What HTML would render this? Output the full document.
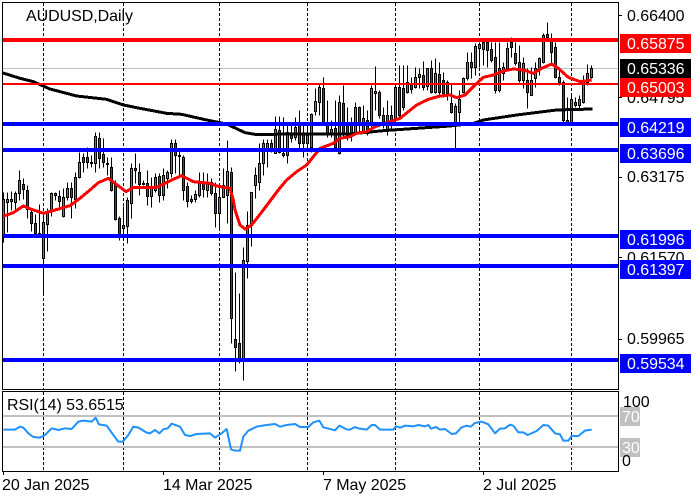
<!DOCTYPE html>
<html><head><meta charset="utf-8"><style>
html,body{margin:0;padding:0;background:#fff}
#c{position:relative;width:700px;height:500px;overflow:hidden;background:#fff;font-family:"Liberation Sans",sans-serif;font-size:16px;color:#000}
svg{position:absolute;left:0;top:0}
.t{position:absolute;white-space:nowrap;line-height:19px;height:19px;letter-spacing:-.05px}
.b{position:absolute;left:620px;width:71px;height:19px;line-height:21px;color:#fff;text-indent:7px;letter-spacing:-.05px}
.a{left:627px}
</style></head><body><div id="c">
<svg width="700" height="500" viewBox="0 0 700 500">
<g shape-rendering="crispEdges">
<path d="M3 68.5H618" stroke="#c0c0c0" fill="none"/>
<path d="M43.5 3V389M123.5 3V389M219.5 3V389M307.5 3V389M395.5 3V389M479.5 3V389M571.5 3V389M43.5 392V471M123.5 392V471M219.5 392V471M307.5 392V471M395.5 392V471M479.5 392V471M571.5 392V471" stroke="#000" stroke-dasharray="3 2" fill="none"/>
<g transform="translate(.5,.5)" stroke="#000" stroke-width="1">
<path fill="none" d="M3 192V242M7 192V232M11 191V210M15 191V210M19 170V200M23 178V199M27 185V218M31 208V231M35 214V233M39 204V236M43 213V293M47 208V251M51 192V216M55 192V200M59 190V210M63 188V217M67 182V200M71 182V218M75 172V208M79 152V178M83 153V172M87 147V168M91 155V167M95 132V172M99 132V168M103 138V167M107 157V175M111 157V191M115 180V220M119 216V240M123 206V235M127 197V243M131 163V218M135 153V183M139 163V195M143 180V185M147 170V205M151 177V207M155 173V192M159 173V202M163 168V200M167 170V188M171 139V177M175 139V173M179 148V177M183 155V200M187 182V207M191 195V203M195 190V202M199 172V197M203 172V197M207 173V197M211 178V195M215 182V227M219 190V230M223 168V197M227 140V223M231 167V343M235 272V371M239 293V363M243 247V380M247 211V278M251 192V246M255 167V198M259 143V190M263 139V175M267 139V167M271 139V152M275 116V153M279 116V153M283 117V157M287 123V163M291 122V142M295 117V140M299 110V148M303 125V157M307 125V148M311 113V152M315 88V115M319 83V115M323 77V123M327 100V137M331 120V137M335 100V150M339 95V154M343 85V138M347 107V140M351 117V141M355 102V135M359 106V132M363 105V133M367 110V135M371 85V128M375 66V110M379 90V118M383 107V128M387 100V135M391 105V128M395 83V122M399 65V118M403 65V110M407 65V93M411 77V93M415 67V88M419 68V88M423 61V90M427 68V90M431 60V93M435 58V93M439 62V95M443 72V97M447 80V100M451 83V113M455 103V148M459 90V122M463 77V93M467 52V80M471 52V78M475 43V75M479 42V67M483 42V65M487 42V67M491 42V62M495 42V93M499 42V92M503 62V80M507 42V71M511 37V57M515 42V65M519 45V82M523 57V88M527 68V108M531 67V95M535 62V87M539 57V75M543 33V63M547 22V40M551 33V62M555 42V78M559 67V85M563 80V122M567 97V123M571 95V123M575 97V107M579 95V110M583 75V103M587 64V85M591 65V78"/>
<path fill="#3c9d3c" d="M2 199h2V235h-2zM6 199h2V202h-2zM10 199h2V201h-2zM14 193h2V202h-2zM18 180h2V193h-2zM42 222h2V258h-2zM46 211h2V224h-2zM50 193h2V211h-2zM62 197h2V216h-2zM66 188h2V197h-2zM74 177h2V199h-2zM78 162h2V177h-2zM94 136h2V163h-2zM122 225h2V228h-2zM126 200h2V226h-2zM130 168h2V203h-2zM150 188h2V196h-2zM154 177h2V190h-2zM162 175h2V195h-2zM166 172h2V178h-2zM170 143h2V173h-2zM194 194h2V199h-2zM198 183h2V195h-2zM206 183h2V190h-2zM218 197h2V213h-2zM222 185h2V197h-2zM226 171h2V195h-2zM242 260h2V360h-2zM246 225h2V261h-2zM250 192h2V225h-2zM254 175h2V185h-2zM258 163h2V182h-2zM262 143h2V163h-2zM266 143h2V148h-2zM274 129h2V153h-2zM286 132h2V155h-2zM294 127h2V137h-2zM306 135h2V143h-2zM310 114h2V147h-2zM314 101h2V111h-2zM318 87h2V102h-2zM330 129h2V133h-2zM338 102h2V153h-2zM354 107h2V132h-2zM362 118h2V132h-2zM370 88h2V124h-2zM374 91h2V93h-2zM386 115h2V130h-2zM394 87h2V118h-2zM406 82h2V92h-2zM414 77h2V87h-2zM418 74h2V77h-2zM426 68h2V86h-2zM434 73h2V92h-2zM454 106h2V122h-2zM458 99h2V112h-2zM462 78h2V92h-2zM466 62h2V78h-2zM474 46h2V67h-2zM478 44h2V48h-2zM482 42h2V49h-2zM498 68h2V90h-2zM502 67h2V73h-2zM506 48h2V68h-2zM522 63h2V80h-2zM530 80h2V95h-2zM534 68h2V78h-2zM538 58h2V68h-2zM542 35h2V62h-2zM570 99h2V122h-2zM578 99h2V105h-2zM582 80h2V102h-2zM586 73h2V82h-2zM590 68h2V77h-2z"/>
<path fill="#c81414" d="M22 184h2V189h-2zM26 190h2V209h-2zM30 212h2V223h-2zM34 223h2V233h-2zM38 233h2V234h-2zM54 193h2V195h-2zM58 196h2V201h-2zM70 188h2V197h-2zM82 157h2V162h-2zM86 157h2V162h-2zM90 162h2V163h-2zM98 138h2V158h-2zM102 154h2V162h-2zM106 163h2V164h-2zM110 167h2V190h-2zM114 183h2V219h-2zM118 218h2V234h-2zM134 168h2V170h-2zM138 172h2V184h-2zM142 183h2V184h-2zM146 183h2V196h-2zM158 176h2V195h-2zM174 143h2V155h-2zM178 155h2V156h-2zM182 157h2V190h-2zM186 186h2V201h-2zM190 199h2V201h-2zM202 183h2V189h-2zM210 182h2V193h-2zM214 193h2V213h-2zM230 172h2V318h-2zM234 339h2V347h-2zM238 343h2V360h-2zM270 143h2V148h-2zM278 130h2V152h-2zM282 153h2V155h-2zM290 133h2V138h-2zM298 125h2V143h-2zM302 133h2V143h-2zM322 88h2V123h-2zM326 123h2V133h-2zM334 128h2V147h-2zM342 103h2V132h-2zM346 122h2V137h-2zM350 123h2V133h-2zM358 107h2V123h-2zM366 120h2V133h-2zM378 92h2V115h-2zM382 115h2V123h-2zM390 115h2V122h-2zM398 87h2V115h-2zM402 88h2V107h-2zM410 83h2V89h-2zM422 75h2V87h-2zM430 68h2V92h-2zM438 74h2V92h-2zM442 80h2V93h-2zM446 82h2V93h-2zM450 103h2V112h-2zM470 62h2V67h-2zM486 42h2V50h-2zM490 49h2V60h-2zM494 57h2V90h-2zM510 42h2V47h-2zM514 53h2V63h-2zM518 62h2V80h-2zM526 80h2V92h-2zM546 34h2V37h-2zM550 38h2V52h-2zM554 47h2V77h-2zM558 77h2V82h-2zM562 82h2V120h-2zM566 120h2V123h-2zM574 102h2V105h-2z"/>
</g>
</g>
<g transform="scale(.33333)" fill="none" stroke-linejoin="round" shape-rendering="crispEdges">
<polyline stroke="#000" stroke-width="9" points="6,218 60,235 100,245 150,267 230,288 320,298 370,315 420,325 500,340 545,343 620,360 680,372 735,398 765,403 1050,402 1150,392 1350,378 1420,370 1450,360 1550,345 1670,330 1778,327"/>
<polyline stroke="#f00" stroke-width="9" points="10,648 40,638 70,618 95,628 130,640 165,630 210,617 240,595 270,570 295,548 325,535 345,550 378,575 400,562 470,562 515,540 545,527 580,545 630,550 650,558 690,565 700,600 705,630 720,675 735,687 755,675 790,630 835,570 860,540 890,515 920,495 960,445 1000,430 1020,415 1050,410 1070,400 1100,395 1125,380 1170,365 1200,355 1250,315 1285,298 1320,288 1350,285 1370,293 1395,285 1425,255 1450,232 1480,225 1510,213 1540,207 1570,210 1600,220 1625,205 1655,192 1675,205 1705,232 1740,245 1775,240"/>
</g>
<g shape-rendering="crispEdges" fill="none">
<path d="M3 40H618" stroke="#f00" stroke-width="4"/>
<path d="M3 84H618" stroke="#f00" stroke-width="2"/>
<path d="M3 124H618M3 150H618M3 236H618M3 266H618M3 360H618" stroke="#00f" stroke-width="4"/>
<path d="M3 416H618M3 447H618" stroke="#c0c0c0" stroke-width="2"/>
<path d="M2.5 2.5H618.5V389.5H2.5ZM2.5 391.5H618.5V471.5H2.5Z" stroke="#000"/>
<path d="M619 15.5h3M619 97.5h3M619 177.5h3M619 257.5h3M619 339.5h3M3.5 472v3M163.5 472v3M323.5 472v3M483.5 472v3" stroke="#000"/>
</g>
<g transform="translate(0,385) scale(.33333)" fill="none" stroke="#1e90ff" stroke-width="6" stroke-linejoin="round">
<polyline points="10,134 45,134 60,125 70,128 85,145 100,156 120,158 135,150 155,130 175,135 195,130 215,132 235,110 250,107 275,110 287,98 297,118 320,122 340,150 355,170 368,170 385,150 400,125 415,128 440,143 450,145 465,135 478,145 490,133 503,130 515,116 540,125 555,150 570,153 590,147 630,145 645,158 665,145 680,132 693,193 705,197 720,197 730,155 745,137 770,125 800,120 825,117 840,125 860,120 885,117 900,126 925,126 940,112 958,107 970,127 1005,136 1018,122 1040,133 1050,134 1065,126 1075,130 1100,134 1115,120 1125,120 1140,134 1180,134 1188,124 1200,128 1215,122 1240,124 1255,120 1275,124 1285,120 1293,131 1308,126 1320,134 1335,132 1355,147 1368,145 1385,127 1400,122 1412,125 1425,114 1445,110 1465,118 1485,145 1500,131 1515,130 1530,119 1540,122 1555,142 1570,142 1583,150 1610,138 1630,120 1645,122 1665,145 1680,148 1690,167 1705,167 1715,153 1735,153 1755,137 1775,134"/>
</g>
</svg>
<div class="t" style="left:26px;top:7px;color:#000">AUDUSD,Daily</div>
<div class="t" style="left:7px;top:396px">RSI(14) 53.6515</div>
<div class="t a" style="top:7px">0.66400</div>
<div class="t a" style="top:89px">0.64795</div>
<div class="t a" style="top:168px">0.63175</div>
<div class="t a" style="top:249px">0.61570</div>
<div class="t a" style="top:330px">0.59965</div>
<div class="b" style="top:34px;background:#f00">0.65875</div>
<div class="b" style="top:59px;background:#000">0.65336</div>
<div class="b" style="top:78px;background:#f00">0.65003</div>
<div class="b" style="top:118px;background:#00f">0.64219</div>
<div class="b" style="top:144px;background:#00f">0.63696</div>
<div class="b" style="top:230px;background:#00f">0.61996</div>
<div class="b" style="top:260px;background:#00f">0.61397</div>
<div class="b" style="top:354px;background:#00f">0.59534</div>
<div class="b" style="top:407px;width:20px;background:#c0c0c0;text-indent:2px">70</div>
<div class="b" style="top:438px;width:20px;background:#c0c0c0;text-indent:2px">30</div>
<div class="t" style="left:623px;top:393px">100</div>
<div class="t" style="left:622px;top:452px">0</div>
<div class="t" style="left:2px;top:476px">20 Jan 2025</div>
<div class="t" style="left:163px;top:476px">14 Mar 2025</div>
<div class="t" style="left:323px;top:476px">7 May 2025</div>
<div class="t" style="left:483px;top:476px">2 Jul 2025</div>
</div></body></html>
